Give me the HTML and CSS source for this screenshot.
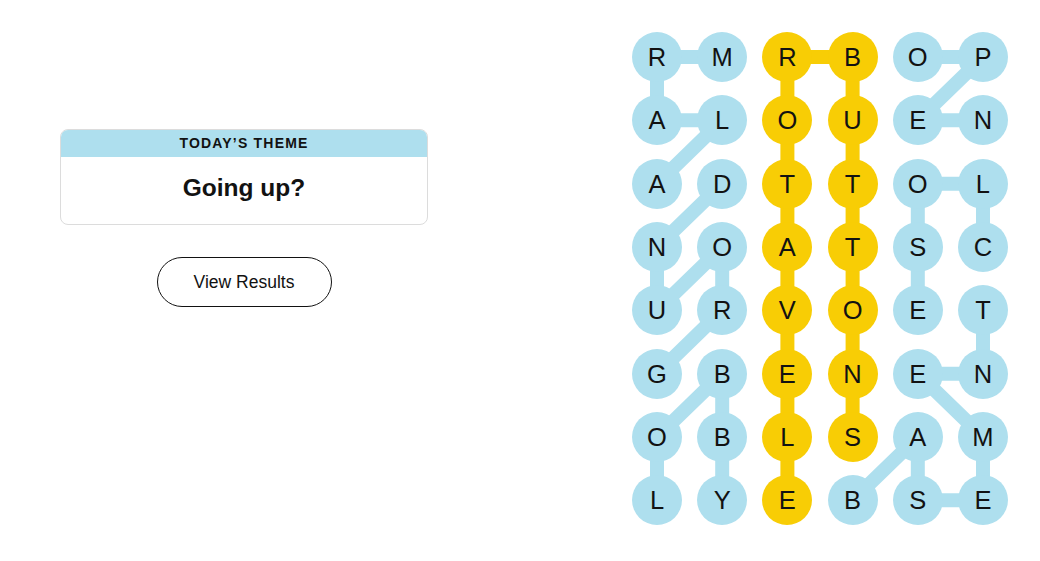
FILE: index.html
```html
<!DOCTYPE html>
<html lang="en">
<head>
<meta charset="utf-8">
<title>Strands</title>
<link rel="stylesheet" href="styles.css">
</head>
<body>
<main class="page">
  <section class="side">
    <div class="theme-card">
      <div class="theme-label">TODAY’S THEME</div>
      <div class="theme-text">Going up?</div>
    </div>
    <button class="results-btn">View Results</button>
  </section>
  <section class="board">
    <svg class="links" viewBox="0 0 376 493" width="376" height="493" aria-hidden="true">
      <g stroke="#aedfee" stroke-width="14" stroke-linecap="butt" fill="none">
        <!-- ALARM -->
        <polyline points="25,151.67 90.2,88.33 25,88.33 25,25 90.2,25"/>
        <!-- GROUND -->
        <polyline points="25,341.67 90.2,278.33 90.2,215 25,278.33 25,215 90.2,151.67"/>
        <!-- LOBBY -->
        <polyline points="25,468.33 25,405 90.2,341.67 90.2,405 90.2,468.33"/>
        <!-- OPEN -->
        <polyline points="285.8,25 351,25 285.8,88.33 351,88.33"/>
        <!-- CLOSE -->
        <polyline points="351,215 351,151.67 285.8,151.67 285.8,215 285.8,278.33"/>
        <!-- BASEMENT -->
        <polyline points="220.6,468.33 285.8,405 285.8,468.33 351,468.33 351,405 285.8,341.67 351,341.67 351,278.33"/>
      </g>
      <g stroke="#f8cd05" stroke-width="14" fill="none">
        <polyline points="155.4,468.33 155.4,25 220.6,25 220.6,405"/>
      </g>
    </svg>
    <div class="grid">
      <span class="cell">R</span><span class="cell">M</span><span class="cell gold">R</span><span class="cell gold">B</span><span class="cell">O</span><span class="cell">P</span>
      <span class="cell">A</span><span class="cell">L</span><span class="cell gold">O</span><span class="cell gold">U</span><span class="cell">E</span><span class="cell">N</span>
      <span class="cell">A</span><span class="cell">D</span><span class="cell gold">T</span><span class="cell gold">T</span><span class="cell">O</span><span class="cell">L</span>
      <span class="cell">N</span><span class="cell">O</span><span class="cell gold">A</span><span class="cell gold">T</span><span class="cell">S</span><span class="cell">C</span>
      <span class="cell">U</span><span class="cell">R</span><span class="cell gold">V</span><span class="cell gold">O</span><span class="cell">E</span><span class="cell">T</span>
      <span class="cell">G</span><span class="cell">B</span><span class="cell gold">E</span><span class="cell gold">N</span><span class="cell">E</span><span class="cell">N</span>
      <span class="cell">O</span><span class="cell">B</span><span class="cell gold">L</span><span class="cell gold">S</span><span class="cell">A</span><span class="cell">M</span>
      <span class="cell">L</span><span class="cell">Y</span><span class="cell gold">E</span><span class="cell">B</span><span class="cell">S</span><span class="cell">E</span>
    </div>
  </section>
</main>
</body>
</html>
```
FILE: styles.css
```css
* { box-sizing: border-box; }
html, body {
  margin: 0;
  padding: 0;
  background: #ffffff;
  color: #121212;
  font-family: "Liberation Sans", Arial, sans-serif;
}
.page {
  display: flex;
  align-items: flex-start;
  padding-top: 32px;
  width: 1040px;
  height: 561px;
}
.side {
  margin-left: 60px;
  width: 368px;
  padding-top: 97px;
  display: flex;
  flex-direction: column;
  align-items: center;
}
.theme-card {
  width: 368px;
  height: 96px;
  border: 1px solid #dcdcdc;
  border-radius: 8px;
  overflow: hidden;
  display: flex;
  flex-direction: column;
}
.theme-label {
  background: #aedfee;
  height: 27px;
  display: flex;
  align-items: center;
  justify-content: center;
  font-size: 14px;
  font-weight: 700;
  letter-spacing: 1.2px;
  padding-bottom: 2px;
}
.theme-text {
  flex: 1;
  display: flex;
  align-items: center;
  justify-content: center;
  font-size: 24.5px;
  font-weight: 700;
  padding-bottom: 5px;
}
.results-btn {
  margin-top: 32px;
  width: 175px;
  height: 50px;
  border: 1px solid #121212;
  border-radius: 25px;
  background: #ffffff;
  color: #121212;
  font-family: "Liberation Sans", Arial, sans-serif;
  font-size: 17.5px;
  padding-bottom: 1px;
}
.board {
  position: relative;
  margin-left: 204px;
  width: 376px;
  height: 493px;
}
.links {
  position: absolute;
  left: 0;
  top: 0;
}
.grid {
  position: relative;
  display: grid;
  grid-template-columns: repeat(6, 50px);
  grid-template-rows: repeat(8, 50px);
  column-gap: 15.2px;
  row-gap: 13.33px;
}
.cell {
  width: 50px;
  height: 50px;
  border-radius: 50%;
  background: #aedfee;
  display: flex;
  align-items: center;
  justify-content: center;
  font-family: "Liberation Sans", Arial, sans-serif;
  font-size: 25.5px;
  color: #121212;
  padding-top: 1px;
}
.cell.gold { background: #f8cd05; }
```
